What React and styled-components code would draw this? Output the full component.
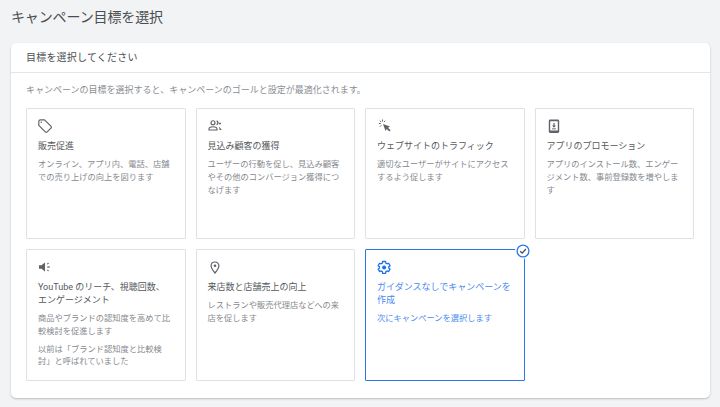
import React from 'react';
import styled, { createGlobalStyle } from 'styled-components';

const GlobalStyle = createGlobalStyle`
  html, body {
    margin: 0;
    padding: 0;
    background: #f1f3f4;
    overflow: hidden;
  }
  body {
    font-family: Roboto, "Noto Sans CJK JP", sans-serif;
  }
`;

const Page = styled.div`
  width: 720px;
  height: 407px;
  box-sizing: border-box;
  padding: 8px 10px 9px 11px;
  display: flex;
  flex-direction: column;
`;

const PageTitle = styled.h1`
  margin: 0 0 16px;
  height: 19px;
  font-size: 14px;
  line-height: 19px;
  font-weight: 400;
  letter-spacing: -0.13px;
  color: #4a4e52;
`;

const Panel = styled.section`
  flex: 1;
  background: #fff;
  border-radius: 5px;
  box-shadow: 0 1px 2px rgba(60, 64, 67, 0.3);
`;

const PanelHeader = styled.h2`
  margin: 0;
  height: 30px;
  box-sizing: border-box;
  padding-left: 15px;
  border-bottom: 1px solid #e4e5e8;
  font-size: 10px;
  line-height: 29px;
  font-weight: 400;
  letter-spacing: 0.2px;
  color: #4a4e52;
`;

const PanelBody = styled.div`
  padding: 10px 16px 0 15px;
`;

const Intro = styled.p`
  margin: 0 0 11px;
  height: 14px;
  font-size: 9px;
  line-height: 14px;
  letter-spacing: 0;
  color: #8a8e93;
  white-space: nowrap;
`;

const Grid = styled.div`
  display: grid;
  grid-template-columns: repeat(4, 159.5px);
  grid-template-rows: 131px 132px;
  column-gap: 10px;
  row-gap: 10px;
`;

const Card = styled.div`
  position: relative;
  box-sizing: border-box;
  padding: 10px 11px 0 11px;
  border: ${(p) => (p.$selected ? '1.5px solid #2a78e8' : '1.5px solid #dfe1e5')};
  border-radius: 1px;
  background: #fff;
`;

const IconSlot = styled.div`
  width: 16px;
  height: 16px;
  margin-bottom: 5px;
  color: ${(p) => (p.$selected ? '#1a73e8' : '#5f6368')};
  svg {
    display: block;
  }
`;

const CardTitle = styled.div`
  font-size: 9px;
  line-height: 13px;
  letter-spacing: 0;
  color: ${(p) => (p.$selected ? '#4a8af0' : '#55595d')};
  margin-bottom: 5px;
`;

const CardText = styled.p`
  margin: 0 0 5px;
  font-size: 8.25px;
  line-height: 12.8px;
  letter-spacing: 0;
  color: ${(p) => (p.$selected ? '#4a8af0' : '#85898e')};
`;

const CheckBadge = styled.div`
  position: absolute;
  top: -6.5px;
  right: -6.5px;
  width: 15px;
  height: 15px;
  border-radius: 50%;
  background: #fff;
  display: flex;
  align-items: center;
  justify-content: center;
`;

const TagIcon = () => (
  <svg width="16" height="16" viewBox="0 0 16 16" fill="none" stroke="currentColor" strokeWidth="1.2" strokeLinejoin="round">
    <path d="M0.8 2.4 C0.8 1.4 1.5 0.8 2.5 0.8 H6.5 L12.9 7.2 C13.5 7.8 13.5 8.5 12.9 9.1 L9.2 12.8 C8.6 13.4 7.9 13.4 7.3 12.8 L0.8 6.4 Z" />
    <circle cx="3.3" cy="3.2" r="0.8" fill="currentColor" stroke="none" />
  </svg>
);

const LeadsIcon = () => (
  <svg width="16" height="16" viewBox="0 0 16 16" fill="none" stroke="currentColor" strokeWidth="1.15">
    <circle cx="5" cy="3.7" r="2" />
    <path d="M1 11 V9.9 C1 8.5 3 7.7 5 7.7 C7 7.7 9 8.5 9 9.9 V11 Z" />
    <path d="M8.6 1.8 A2 2 0 0 1 8.6 5.6" strokeWidth="1.4" />
    <path d="M11 7.6 L13.8 11 H11.6 Z" fill="currentColor" stroke="none" />
    <circle cx="12" cy="4.4" r="1" fill="currentColor" stroke="none" />
  </svg>
);

const ClickIcon = () => (
  <svg width="16" height="16" viewBox="0 0 16 16" fill="currentColor">
    <path d="M6 5 L13 7.5 L11 8.7 L13.6 11.3 L12.3 12.6 L9.7 10 L8.5 12 Z" />
    <g stroke="currentColor" strokeWidth="1" strokeLinecap="round">
      <path d="M5.5 0.9 V2" />
      <path d="M2.3 4.5 H3.4" />
      <path d="M3.2 2 L3.9 2.8" />
      <path d="M7.9 2 L7.2 2.8" />
      <path d="M3.2 7.4 L3.9 6.6" />
    </g>
  </svg>
);

const PhoneIcon = () => (
  <svg width="16" height="16" viewBox="0 0 16 16" fill="currentColor">
    <path fillRule="evenodd" d="M3.2 0.5 H10.8 C11.6 0.5 12.2 1.1 12.2 1.9 V12.6 C12.2 13.4 11.6 14 10.8 14 H3.2 C2.4 14 1.8 13.4 1.8 12.6 V1.9 C1.8 1.1 2.4 0.5 3.2 0.5 Z M3.2 2.3 V11.4 H10.8 V2.3 Z" />
    <path d="M6.4 4 H7.6 V6.6 H9 L7 8.8 L5 6.6 H6.4 Z" />
    <rect x="5" y="9.4" width="4" height="0.9" />
  </svg>
);

const SpeakerIcon = () => (
  <svg width="16" height="16" viewBox="0 0 16 16" fill="currentColor">
    <path d="M1 5.3 H3.5 L7 2.5 V11.5 L3.5 8.7 H1 Z" />
    <rect x="9.2" y="6.4" width="2.6" height="1.2" />
    <path d="M8.8 3.7 L10.4 2.7 L11 3.6 L9.4 4.6 Z" />
    <path d="M8.8 10.3 L10.4 11.3 L11 10.4 L9.4 9.4 Z" />
  </svg>
);

const PinIcon = () => (
  <svg width="16" height="16" viewBox="0 0 16 16" fill="none" stroke="currentColor" strokeWidth="1.2">
    <path d="M7 2 C4.7 2 3.1 3.7 3.1 5.8 C3.1 8.5 7 13 7 13 C7 13 10.9 8.5 10.9 5.8 C10.9 3.7 9.3 2 7 2 Z" />
    <circle cx="7" cy="5.8" r="1.3" fill="currentColor" stroke="none" />
  </svg>
);

const GearIcon = () => (
  <svg width="16" height="16" viewBox="0 0 27 27" fill="none" stroke="currentColor" strokeWidth="2.2" strokeLinejoin="round">
    <path d="M9.6 2.5 H14.4 L15 5.4 C15.7 5.7 16.3 6 16.9 6.5 L19.7 5.5 L22 9.6 L19.8 11.5 C19.9 12.2 19.9 12.8 19.8 13.5 L22 15.4 L19.7 19.5 L16.9 18.5 C16.3 19 15.7 19.3 15 19.6 L14.4 22.5 H9.6 L9 19.6 C8.3 19.3 7.7 19 7.1 18.5 L4.3 19.5 L2 15.4 L4.2 13.5 C4.1 12.8 4.1 12.2 4.2 11.5 L2 9.6 L4.3 5.5 L7.1 6.5 C7.7 6 8.3 5.7 9 5.4 Z" />
    <circle cx="12" cy="12.5" r="3.4" fill="currentColor" stroke="none" />
  </svg>
);

const CheckIcon = () => (
  <svg width="14" height="14" viewBox="0 0 14 14" fill="none">
    <circle cx="7" cy="7" r="5.9" stroke="#2a78e8" strokeWidth="1.3" />
    <path d="M4.2 7.3 L6.2 9.2 L9.9 5" stroke="#3c4a5c" strokeWidth="1.2" />
  </svg>
);

const goals = [
  {
    icon: TagIcon,
    title: '販売促進',
    texts: ['オンライン、アプリ内、電話、店舗での売り上げの向上を図ります'],
  },
  {
    icon: LeadsIcon,
    title: '見込み顧客の獲得',
    texts: ['ユーザーの行動を促し、見込み顧客やその他のコンバージョン獲得につなげます'],
  },
  {
    icon: ClickIcon,
    title: 'ウェブサイトのトラフィック',
    texts: ['適切なユーザーがサイトにアクセスするよう促します'],
  },
  {
    icon: PhoneIcon,
    title: 'アプリのプロモーション',
    texts: ['アプリのインストール数、エンゲージメント数、事前登録数を増やします'],
  },
  {
    icon: SpeakerIcon,
    title: 'YouTube のリーチ、視聴回数、エンゲージメント',
    texts: ['商品やブランドの認知度を高めて比較検討を促進します', '以前は「ブランド認知度と比較検討」と呼ばれていました'],
  },
  {
    icon: PinIcon,
    title: '来店数と店舗売上の向上',
    texts: ['レストランや販売代理店などへの来店を促します'],
  },
  {
    icon: GearIcon,
    title: 'ガイダンスなしでキャンペーンを作成',
    texts: ['次にキャンペーンを選択します'],
    selected: true,
  },
];

export default function App() {
  return (
    <Page>
      <GlobalStyle />
      <PageTitle>キャンペーン目標を選択</PageTitle>
      <Panel>
        <PanelHeader>目標を選択してください</PanelHeader>
        <PanelBody>
          <Intro>キャンペーンの目標を選択すると、キャンペーンのゴールと設定が最適化されます。</Intro>
          <Grid>
            {goals.map((goal) => (
              <Card key={goal.title} $selected={goal.selected}>
                <IconSlot $selected={goal.selected}>
                  <goal.icon />
                </IconSlot>
                <CardTitle $selected={goal.selected}>{goal.title}</CardTitle>
                {goal.texts.map((text) => (
                  <CardText key={text} $selected={goal.selected}>
                    {text}
                  </CardText>
                ))}
                {goal.selected && (
                  <CheckBadge>
                    <CheckIcon />
                  </CheckBadge>
                )}
              </Card>
            ))}
          </Grid>
        </PanelBody>
      </Panel>
    </Page>
  );
}
